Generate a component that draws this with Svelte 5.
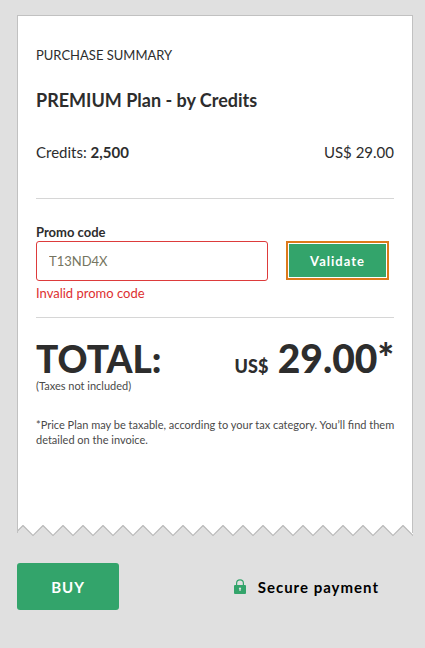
<script>
    let promoCode = 'T13ND4X';
    let promoError = 'Invalid promo code';

    const plan = {
        name: 'PREMIUM Plan - by Credits',
        credits: '2,500',
        currency: 'US$',
        price: '29.00'
    };
</script>

<main class="checkout">
    <section class="receipt">
        <h2 class="receipt-heading">PURCHASE SUMMARY</h2>
        <h3 class="plan-name">{plan.name}</h3>

        <div class="plan-row">
            <span>Credits: <strong>{plan.credits}</strong></span>
            <span>{plan.currency} {plan.price}</span>
        </div>

        <form class="promo" on:submit|preventDefault>
            <label for="promo-code">Promo code</label>
            <div class="promo-fields">
                <input
                    id="promo-code"
                    type="text"
                    bind:value={promoCode}
                    aria-invalid="true"
                    aria-describedby="promo-error"
                />
                <button class="validate-button" type="submit">Validate</button>
            </div>
            <p class="promo-error" id="promo-error">{promoError}</p>
        </form>

        <div class="total">
            <span class="total-label">TOTAL:</span>
            <span class="total-amount">
                <span class="total-currency">{plan.currency}</span>
                {plan.price}*
            </span>
        </div>
        <p class="taxes">(Taxes not included)</p>
        <p class="note">
            *Price Plan may be taxable, according to your tax category. You’ll find them detailed on the invoice.
        </p>
    </section>
    <div class="receipt-edge"></div>

    <footer class="actions">
        <button class="buy-button" type="button">BUY</button>
        <p class="secure">
            <svg width="12" height="15" viewBox="0 0 12 15" aria-hidden="true">
                <path d="M2.6 7V4.2a3.4 3.4 0 0 1 6.8 0V7" fill="none" stroke="#33a46b" stroke-width="1.2" />
                <rect y="6" width="12" height="9" rx="1" fill="#33a46b" />
                <path d="M6 8.4a1.2 1.2 0 0 1 .6 2.2V12H5.4v-1.4A1.2 1.2 0 0 1 6 8.4z" fill="#e0e0e0" />
            </svg>
            Secure payment
        </p>
    </footer>
</main>

<style>
    :global(body) {
        background-color: #e0e0e0;
    }

    .checkout {
        padding: 15px 12px 38px 17px;
        font-family: Lato, "Open Sans", sans-serif;
        color: #2d2d2d;
    }

    .receipt {
        padding: 29px 18px 78px;
        background-color: #fff;
        border: 1px solid #c1c1c1;
        border-bottom: none;
    }

    h2,
    h3,
    p {
        margin: 0;
    }

    .receipt-heading {
        font-size: 13px;
        font-weight: 400;
        line-height: 20px;
    }

    .plan-name {
        margin-top: 23px;
        font-size: 18px;
        font-weight: 700;
        line-height: 24px;
    }

    .plan-row {
        display: flex;
        justify-content: space-between;
        margin-top: 30px;
        padding-bottom: 36px;
        border-bottom: 1px solid #d6d6d6;
        font-size: 15px;
        line-height: 20px;
    }

    .promo {
        padding: 25px 0 15px;
        border-bottom: 1px solid #d6d6d6;
    }

    .promo label {
        display: block;
        margin-bottom: 1px;
        font-size: 13px;
        font-weight: 700;
        line-height: 16px;
    }

    .promo-fields {
        display: flex;
        align-items: flex-start;
        gap: 21px;
        padding-right: 8px;
    }

    .promo input {
        flex: 1;
        min-width: 0;
        height: 40px;
        box-sizing: border-box;
        padding: 0 12px;
        border: 1px solid #dd3b3b;
        border-radius: 3px;
        background-color: #fff;
        color: #757561;
        font: 13px Lato, "Open Sans", sans-serif;
    }

    button {
        border: none;
        background-color: #33a46b;
        color: #fff;
        font-family: inherit;
        font-weight: 700;
        letter-spacing: 1px;
        cursor: pointer;
    }

    .validate-button {
        width: 97px;
        height: 33px;
        margin-top: 3px;
        padding: 0;
        font-size: 13px;
        outline: 2px solid #dd7a1b;
        outline-offset: 1px;
    }

    .promo-error {
        margin-top: 3px;
        color: #dd3030;
        font-size: 13px;
        line-height: 18px;
    }

    .total {
        display: flex;
        justify-content: space-between;
        align-items: baseline;
        margin-top: 20px;
        font-weight: 900;
        line-height: 40px;
    }

    .total-label {
        font-size: 37px;
    }

    .total-amount {
        font-size: 39px;
    }

    .total-currency {
        font-size: 18px;
        line-height: 20px;
    }

    .taxes {
        color: #4a4a4a;
        font-size: 11px;
        line-height: 14px;
    }

    .note {
        margin: 24px -8px 0 0;
        color: #4a4a4a;
        font-size: 11px;
        line-height: 15px;
    }

    /* torn paper edge, the teeth line up with the right side */
    .receipt-edge {
        height: 12px;
        background:
            linear-gradient(#c1c1c1, #c1c1c1) left top / 1px 8px no-repeat,
            linear-gradient(#c1c1c1, #c1c1c1) right top / 1px 8px no-repeat,
            url("data:image/svg+xml,%3Csvg xmlns='http://www.w3.org/2000/svg' width='20' height='12'%3E%3Cpath d='M0 0H20V10.5L10 .5L0 10.5z' fill='%23fff'/%3E%3Cpath d='M-1 9.5L0 10.5L10 .5L20 10.5L21 9.5' fill='none' stroke='%23b8b8b8' stroke-width='1.2'/%3E%3C/svg%3E") right top repeat-x;
    }

    .actions {
        display: flex;
        justify-content: space-between;
        align-items: center;
        margin-top: 26px;
        padding-right: 34px;
    }

    .buy-button {
        width: 102px;
        height: 47px;
        padding: 0;
        border-radius: 3px;
        font-size: 15px;
    }

    .secure {
        display: flex;
        align-items: center;
        gap: 12px;
        color: #000;
        font-size: 15px;
        font-weight: 700;
        letter-spacing: 1px;
    }
</style>
